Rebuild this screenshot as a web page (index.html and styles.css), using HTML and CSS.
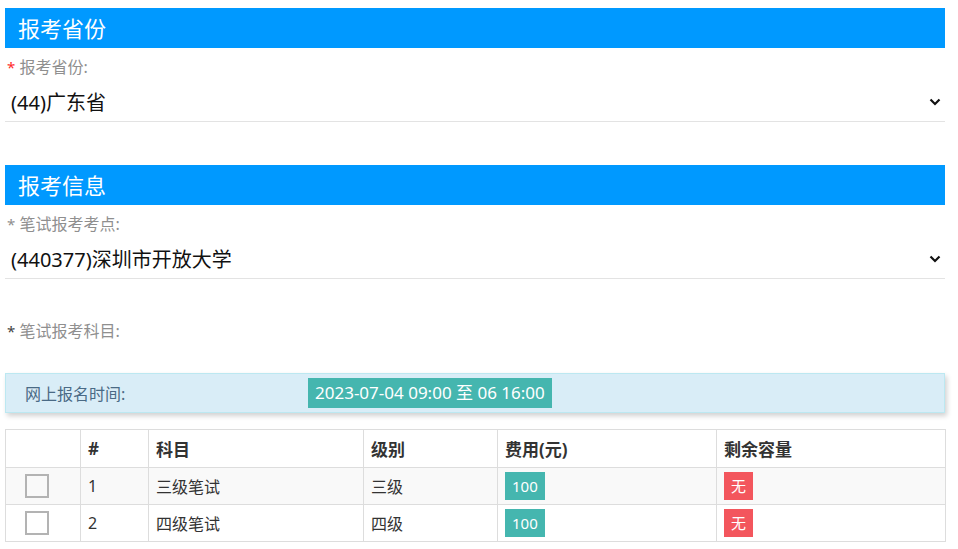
FILE: index.html
```html
<!DOCTYPE html>
<html lang="zh-CN">
<head>
<meta charset="utf-8">
<title>报考</title>
<link rel="stylesheet" href="styles.css">
</head>
<body>
<div class="page">
  <div class="section-title">报考省份</div>
  <div class="field-label"><span class="req red">*</span> 报考省份:</div>
  <div class="select">
    <span class="select-text">(44)广东省</span>
    <svg class="chev" width="12" height="8" viewBox="0 0 12 8"><polyline points="1.5,1.5 6,6 10.5,1.5" fill="none" stroke="#111" stroke-width="2.2"/></svg>
  </div>

  <div class="section-title second">报考信息</div>
  <div class="field-label"><span class="req gray">*</span> 笔试报考考点:</div>
  <div class="select">
    <span class="select-text">(440377)深圳市开放大学</span>
    <svg class="chev" width="12" height="8" viewBox="0 0 12 8"><polyline points="1.5,1.5 6,6 10.5,1.5" fill="none" stroke="#111" stroke-width="2.2"/></svg>
  </div>

  <div class="field-label subject"><span class="req dark">*</span> 笔试报考科目:</div>

  <div class="alert">
    <span class="alert-label">网上报名时间:</span>
    <span class="time-badge">2023-07-04 09:00 至 06 16:00</span>
  </div>

  <table class="subjects">
    <colgroup>
      <col class="c1"><col class="c2"><col class="c3"><col class="c4"><col class="c5"><col class="c6">
    </colgroup>
    <thead>
      <tr><th></th><th>#</th><th>科目</th><th>级别</th><th>费用(元)</th><th>剩余容量</th></tr>
    </thead>
    <tbody>
      <tr class="odd">
        <td><span class="checkbox"></span></td>
        <td>1</td><td>三级笔试</td><td>三级</td>
        <td><span class="badge teal">100</span></td>
        <td><span class="badge red-bg">无</span></td>
      </tr>
      <tr>
        <td><span class="checkbox"></span></td>
        <td>2</td><td>四级笔试</td><td>四级</td>
        <td><span class="badge teal">100</span></td>
        <td><span class="badge red-bg">无</span></td>
      </tr>
    </tbody>
  </table>
</div>
</body>
</html>
```

FILE: styles.css
```css
* { box-sizing: border-box; }
html, body { margin: 0; padding: 0; background: #fff; }
body {
  font-family: "Noto Sans", "Noto Sans CJK SC", sans-serif;
  color: #333;
}
.page {
  width: 940px;
  margin-left: 5px;
  padding-top: 8px;
}
.section-title {
  height: 40px;
  background: #0099ff;
  color: #fff;
  font-size: 22px;
  line-height: 40px;
  padding-left: 13px;
}
.section-title.second { margin-top: 43px; }
.field-label {
  margin-top: 9px;
  font-size: 16px;
  line-height: 20px;
  color: #8f8f8f;
  padding-left: 2px;
}
.req { font-size: 15px; }
.req.red { color: #ff2a2a; }
.req.gray { color: #8f8f8f; }
.req.dark { color: #444; }
.field-label.subject { margin-top: 42px; }
.select {
  height: 40px;
  border-bottom: 1px solid #e3e3e3;
  display: flex;
  align-items: center;
  justify-content: space-between;
  padding: 0 4px 0 6px;
  margin-top: 5px;
}
.select-text {
  font-size: 20px;
  color: #111;
}
.chev { display: block; }
.alert {
  margin-top: 32px;
  height: 40px;
  background: #d9edf7;
  border: 1px solid #bce8f1;
  box-shadow: 2px 3px 5px rgba(0,0,0,0.18);
  display: flex;
  align-items: center;
  padding-left: 19px;
}
.alert-label {
  font-size: 16px;
  color: #4a6a85;
  width: 283px;
}
.time-badge {
  background: #45b6af;
  color: #fff;
  font-size: 17px;
  height: 30px;
  line-height: 30px;
  padding: 0 7px;
}
.subjects {
  margin-top: 16px;
  width: 940px;
  border-collapse: collapse;
  table-layout: fixed;
  border: 1px solid #dddddd;
}
.c1 { width: 75px; }
.c2 { width: 68px; }
.c3 { width: 215px; }
.c4 { width: 134px; }
.c5 { width: 219px; }
.c6 { width: 229px; }
.subjects th, .subjects td {
  border: 1px solid #dddddd;
  text-align: left;
  vertical-align: middle;
  padding: 0 7px;
}
.subjects th {
  height: 38px;
  font-size: 17px;
  font-weight: bold;
  color: #333;
}
.subjects td {
  height: 37px;
  font-size: 16px;
  color: #333;
}
.subjects tr.odd td { background: #f9f9f9; }
.checkbox {
  display: block;
  width: 24px;
  height: 24px;
  border: 2px solid #b3b3b3;
  margin-left: 12px;
}
.badge {
  display: inline-block;
  height: 28px;
  line-height: 28px;
  padding: 0 7px;
  color: #fff;
  font-size: 15px;
  vertical-align: middle;
}
.badge.teal { background: #45b6af; }
.badge.red-bg { background: #f3565d; }
```
